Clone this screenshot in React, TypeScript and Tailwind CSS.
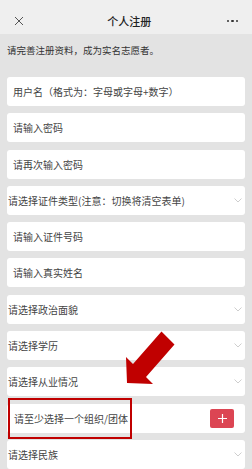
import React from "react";

const font = { fontFamily: '"Noto Sans CJK SC", "Noto Sans", sans-serif' };

function Chevron() {
  return (
    <svg width="8" height="5" viewBox="0 0 8 5" className="shrink-0">
      <path d="M0.5 0.5 L4 4 L7.5 0.5" fill="none" stroke="#c8c8c8" strokeWidth="0.9" />
    </svg>
  );
}

function InputRow({ text }: { text: string }) {
  return (
    <div className="h-[29px] bg-white rounded-[3px] flex items-center pl-[6px] text-[10px] text-[#444]">
      {text}
    </div>
  );
}

function SelectRow({ text }: { text: string }) {
  return (
    <div className="h-[29px] bg-white rounded-[3px] flex items-center justify-between pl-[1px] pr-[3px] text-[10px] text-[#444]">
      <span>{text}</span>
      <Chevron />
    </div>
  );
}

export default function App() {
  return (
    <div className="relative w-[252px] h-[469px] overflow-hidden bg-[#e3e3e3]" style={font}>
      <div className="h-[34px] bg-[#efefef] flex items-center justify-between pt-[8px] px-[14px]">
        <svg width="10" height="10" viewBox="0 0 10 10">
          <path d="M1 1 L9 9 M9 1 L1 9" stroke="#555" strokeWidth="1" />
        </svg>
        <span className="text-[11px] text-[#222] font-medium ml-[8px]">个人注册</span>
        <div className="flex gap-[2px] mr-[0px]">
          <span className="w-[2.5px] h-[2.5px] rounded-full bg-[#333]" />
          <span className="w-[2.5px] h-[2.5px] rounded-full bg-[#333]" />
          <span className="w-[2.5px] h-[2.5px] rounded-full bg-[#333]" />
        </div>
      </div>
      <div className="h-[43px] pl-[7px] pt-[9px] text-[9.5px] text-[#333]">
        请完善注册资料，成为实名志愿者。
      </div>
      <div className="flex flex-col gap-[7.3px] px-[7px]">
        <div className="h-[29px] bg-white rounded-[3px] flex items-center pl-[6px] text-[10px] text-[#444]">
          用户名（格式为：字母或字母+数字）
        </div>
        <InputRow text="请输入密码" />
        <InputRow text="请再次输入密码" />
        <SelectRow text="请选择证件类型(注意：切换将清空表单)" />
        <InputRow text="请输入证件号码" />
        <InputRow text="请输入真实姓名" />
        <SelectRow text="请选择政治面貌" />
        <SelectRow text="请选择学历" />
        <SelectRow text="请选择从业情况" />
        <div className="relative h-[29px] bg-white rounded-[3px] flex items-center justify-between pl-[7px] pr-[11px] text-[10px] text-[#444]">
          <span>请至少选择一个组织/团体</span>
          <div className="w-[24px] h-[19px] bg-[#dc4553] rounded-[2px] flex items-center justify-center">
            <svg width="9" height="9" viewBox="0 0 9 9">
              <path d="M4.5 0 V9 M0 4.5 H9" stroke="#fff" strokeWidth="1.2" />
            </svg>
          </div>
          <div className="absolute -top-[6px] left-[1px] w-[124px] h-[41px] border-2 border-[#c00000]" />
        </div>
        <SelectRow text="请选择民族" />
      </div>
      <svg className="absolute left-0 top-0 pointer-events-none" width="252" height="469" viewBox="0 0 252 469">
        <polygon
          points="161.5,331.5 174.5,344.5 146,377 153,384 127,383 126,357 133,364"
          fill="#c00000"
        />
      </svg>
    </div>
  );
}
